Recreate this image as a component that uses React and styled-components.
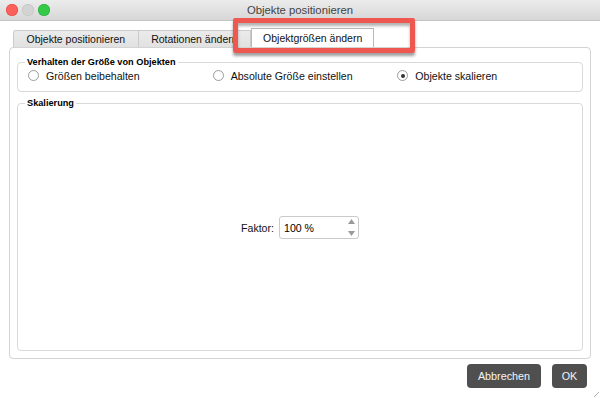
import React from "react";
import styled, { createGlobalStyle } from "styled-components";

const Global = createGlobalStyle`
  html, body { margin: 0; padding: 0; width: 600px; height: 398px; overflow: hidden; background: #fff; }
  body { font-family: "Liberation Sans", Arial, sans-serif; color: #1d1d1d; }
  * { box-sizing: border-box; }
`;

const Window = styled.div`
  position: relative;
  width: 600px;
  height: 398px;
  display: flex;
  flex-direction: column;
  background: #fff;
  overflow: hidden;
`;

const TitleBar = styled.div`
  flex: 0 0 20px;
  display: grid;
  grid-template-columns: 1fr auto 1fr;
  align-items: center;
  background: linear-gradient(#ececec, #d7d7d7);
  border-bottom: 1px solid #c4c4c4;
`;

const Lights = styled.div`
  display: flex;
  gap: 4px;
  padding-left: 6px;
`;

const Light = styled.span`
  width: 12px;
  height: 12px;
  border-radius: 50%;
  background: ${(p) => p.$c};
  box-shadow: inset 0 0 0 0.5px ${(p) => p.$b};
`;

const Title = styled.div`
  font-size: 11.3px;
  color: #444;
  line-height: 20px;
`;

const Body = styled.div`
  flex: 1;
  display: flex;
  flex-direction: column;
  padding: 0 9px;
  min-height: 0;
`;

const TabRow = styled.div`
  display: flex;
  align-items: flex-end;
  height: 19px;
  margin-top: 7px;
  padding-left: 4px;
`;

const Tab = styled.div`
  height: ${(p) => (p.$active ? 19 : 17)}px;
  display: flex;
  align-items: center;
  padding: 0 ${(p) => (p.$active ? 11 : 12.5)}px;
  font-size: 10.5px;
  color: #111;
  background: ${(p) => (p.$active ? "#fff" : "linear-gradient(#ebebeb, #e1e1e1)")};
  border: 1px solid ${(p) => (p.$active ? "#b9b9b9" : "#cbcbcb")};
  border-bottom: none;
  border-left-width: ${(p) => (p.$first || p.$active ? 1 : 0)}px;
  border-radius: ${(p) => (p.$first ? "3px 0 0 0" : "0")};
  white-space: nowrap;
`;

const Panel = styled.div`
  flex: 1;
  display: flex;
  flex-direction: column;
  border: 1px solid #d3d3d3;
  border-radius: 4px;
  padding: 8px 7px 7px;
  min-height: 0;
`;

const Group = styled.fieldset`
  margin: ${(p) => (p.$spaced ? "5px 0 0" : "0")};
  padding: 0;
  border: 1px solid #d9d9d9;
  border-radius: 4px;
  min-width: 0;
  display: flex;
  flex-direction: column;
  flex: ${(p) => (p.$grow ? 1 : "0 0 auto")};
`;

const Legend = styled.legend`
  margin-left: 7px;
  padding: 0 2px;
  font-size: 9.2px;
  font-weight: bold;
  line-height: 12px;
  color: #000;
`;

const RadioRow = styled.div`
  display: grid;
  grid-template-columns: repeat(3, 1fr);
  padding: 0 0 8px 10px;
`;

const RadioItem = styled.label`
  display: flex;
  align-items: center;
  gap: 7px;
  height: 15px;
  font-size: 10.6px;
  color: #111;
`;

const RadioCircle = styled.span`
  width: 11px;
  height: 11px;
  border-radius: 50%;
  border: 1px solid #9b9b9b;
  background: #fff;
  display: flex;
  align-items: center;
  justify-content: center;
  &::after {
    content: "";
    width: 4px;
    height: 4px;
    border-radius: 50%;
    background: ${(p) => (p.$checked ? "#333" : "transparent")};
  }
`;

const Center = styled.div`
  flex: 1;
  display: flex;
  align-items: center;
  justify-content: center;
  gap: 5px;
  padding-bottom: 4px;
`;

const Label = styled.span`
  font-size: 10.6px;
  color: #111;
`;

const Spin = styled.div`
  width: 80px;
  height: 23px;
  border: 1px solid #cacaca;
  border-radius: 3px;
  display: flex;
  align-items: center;
  justify-content: space-between;
  padding: 0 3px 0 4px;
  font-size: 10.6px;
  color: #000;
`;

const Arrows = styled.div`
  display: flex;
  flex-direction: column;
  justify-content: space-between;
  height: 17px;
`;

const Footer = styled.div`
  flex: 0 0 39px;
  display: flex;
  justify-content: flex-end;
  align-items: flex-start;
  gap: 11px;
  padding: 5px 4px 0 0;
`;

const Button = styled.button`
  width: ${(p) => p.$w}px;
  height: 24px;
  border: none;
  border-radius: 4px;
  background: #4f4f4f;
  color: #f4f4f4;
  font-family: inherit;
  font-size: 10.8px;
  padding: 0;
`;

const Highlight = styled.div`
  position: absolute;
  left: 233px;
  top: 18px;
  width: 182px;
  height: 35px;
  border: 5px solid #ef5850;
  border-radius: 2px;
  box-shadow: 0 3px 3px rgba(0, 0, 0, 0.38), inset 0 3px 3px rgba(0, 0, 0, 0.3);
  pointer-events: none;
`;

const Grip = styled.svg`
  position: absolute;
  right: 1px;
  bottom: 1px;
`;

export default function App() {
  return (
    <>
      <Global />
      <Window>
        <TitleBar>
          <Lights>
            <Light $c="#fc605b" $b="#de4640" />
            <Light $c="#d3d3d3" $b="#c0c0c0" />
            <Light $c="#35c94a" $b="#27a83a" />
          </Lights>
          <Title>Objekte positionieren</Title>
          <div />
        </TitleBar>
        <Body>
          <TabRow>
            <Tab $first>Objekte positionieren</Tab>
            <Tab>Rotationen ändern</Tab>
            <Tab $active>Objektgrößen ändern</Tab>
          </TabRow>
          <Panel>
            <Group>
              <Legend>Verhalten der Größe von Objekten</Legend>
              <RadioRow>
                <RadioItem>
                  <RadioCircle />
                  Größen beibehalten
                </RadioItem>
                <RadioItem>
                  <RadioCircle />
                  Absolute Größe einstellen
                </RadioItem>
                <RadioItem>
                  <RadioCircle $checked />
                  Objekte skalieren
                </RadioItem>
              </RadioRow>
            </Group>
            <Group $grow $spaced>
              <Legend>Skalierung</Legend>
              <Center>
                <Label>Faktor:</Label>
                <Spin>
                  <span>100 %</span>
                  <Arrows>
                    <svg width="7" height="5" viewBox="0 0 7 5">
                      <path d="M3.5 0 L7 5 L0 5 Z" fill="#9a9a9a" />
                    </svg>
                    <svg width="7" height="5" viewBox="0 0 7 5">
                      <path d="M0 0 L7 0 L3.5 5 Z" fill="#9a9a9a" />
                    </svg>
                  </Arrows>
                </Spin>
              </Center>
            </Group>
          </Panel>
          <Footer>
            <Button $w={74}>Abbrechen</Button>
            <Button $w={35}>OK</Button>
          </Footer>
        </Body>
        <Highlight />
        <Grip width="5" height="5" viewBox="0 0 5 5">
          <path d="M5 0 L0 5" stroke="#b0b0b0" strokeWidth="1" />
        </Grip>
      </Window>
    </>
  );
}
